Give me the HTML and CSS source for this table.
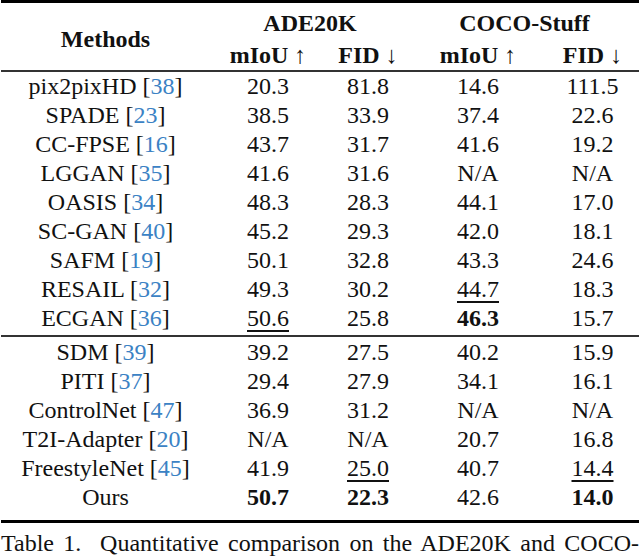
FILE: index.html
```html
<!DOCTYPE html>
<html lang="en">
<head>
<meta charset="utf-8">
<title>Table 1</title>
<link rel="stylesheet" href="styles.css">
</head>
<body>
<div class="page">
<table class="results">
  <colgroup>
    <col class="c-method">
    <col class="c-ade-miou">
    <col class="c-ade-fid">
    <col class="c-coco-miou">
    <col class="c-coco-fid">
  </colgroup>
  <thead>
    <tr class="head-top">
      <th rowspan="2" class="methods-head">Methods</th>
      <th colspan="2" class="ds ds-ade">ADE20K</th>
      <th colspan="2" class="ds ds-coco">COCO-Stuff</th>
    </tr>
    <tr class="head-sub">
      <th>mIoU <span class="arrow">↑</span></th>
      <th>FID <span class="arrow">↓</span></th>
      <th>mIoU <span class="arrow">↑</span></th>
      <th>FID <span class="arrow">↓</span></th>
    </tr>
  </thead>
  <tbody class="group group-gan">
    <tr><td>pix2pixHD [<span class="cite">38</span>]</td><td>20.3</td><td>81.8</td><td>14.6</td><td>111.5</td></tr>
    <tr><td>SPADE [<span class="cite">23</span>]</td><td>38.5</td><td>33.9</td><td>37.4</td><td>22.6</td></tr>
    <tr><td>CC-FPSE [<span class="cite">16</span>]</td><td>43.7</td><td>31.7</td><td>41.6</td><td>19.2</td></tr>
    <tr><td>LGGAN [<span class="cite">35</span>]</td><td>41.6</td><td>31.6</td><td>N/A</td><td>N/A</td></tr>
    <tr><td>OASIS [<span class="cite">34</span>]</td><td>48.3</td><td>28.3</td><td>44.1</td><td>17.0</td></tr>
    <tr><td>SC-GAN [<span class="cite">40</span>]</td><td>45.2</td><td>29.3</td><td>42.0</td><td>18.1</td></tr>
    <tr><td>SAFM [<span class="cite">19</span>]</td><td>50.1</td><td>32.8</td><td>43.3</td><td>24.6</td></tr>
    <tr><td>RESAIL [<span class="cite">32</span>]</td><td>49.3</td><td>30.2</td><td><span class="second">44.7</span></td><td>18.3</td></tr>
    <tr class="last"><td>ECGAN [<span class="cite">36</span>]</td><td><span class="second">50.6</span></td><td>25.8</td><td><b>46.3</b></td><td>15.7</td></tr>
  </tbody>
  <tbody class="group group-diff">
    <tr class="first"><td>SDM [<span class="cite">39</span>]</td><td>39.2</td><td>27.5</td><td>40.2</td><td>15.9</td></tr>
    <tr><td>PITI [<span class="cite">37</span>]</td><td>29.4</td><td>27.9</td><td>34.1</td><td>16.1</td></tr>
    <tr><td>ControlNet [<span class="cite">47</span>]</td><td>36.9</td><td>31.2</td><td>N/A</td><td>N/A</td></tr>
    <tr><td>T2I-Adapter [<span class="cite">20</span>]</td><td>N/A</td><td>N/A</td><td>20.7</td><td>16.8</td></tr>
    <tr><td>FreestyleNet [<span class="cite">45</span>]</td><td>41.9</td><td><span class="second">25.0</span></td><td>40.7</td><td><span class="second">14.4</span></td></tr>
    <tr class="last"><td>Ours</td><td><b>50.7</b></td><td><b>22.3</b></td><td>42.6</td><td><b>14.0</b></td></tr>
  </tbody>
</table>
<p class="caption">Table 1.&nbsp; Quantitative comparison on the ADE20K and COCO-</p>
</div>
</body>
</html>
```

FILE: styles.css
```css
html, body {
  margin: 0;
  padding: 0;
  background: #ffffff;
}

body {
  width: 640px;
  height: 558px;
  overflow: hidden;
  font-family: "Liberation Serif", "Times New Roman", serif;
  font-size: 24px;
  color: #111111;
}

.page {
  display: flex;
  flex-direction: column;
  padding: 0 1px;
}

.results {
  border-collapse: collapse;
  table-layout: fixed;
  width: 638px;
  line-height: 29px;
}

.c-method { width: 209px; }
.c-ade-miou { width: 116px; }
.c-ade-fid { width: 84px; }
.c-coco-miou { width: 136px; }
.c-coco-fid { width: 93px; }

.results th,
.results td {
  padding: 0;
  text-align: center;
  white-space: nowrap;
}

.results th {
  font-weight: bold;
}

.head-top {
  border-top: 3px solid #000000;
}

.head-top th {
  padding-top: 6px;
}

.methods-head {
  vertical-align: middle;
}

.ds-ade {
  padding-left: 32px;
}

.ds-coco {
  padding-left: 18px;
}

.head-sub th {
  padding-top: 3px;
  padding-bottom: 0;
}

.head-sub {
  border-bottom: 2px solid #333333;
}

.arrow {
  font-weight: normal;
}

.group-gan .last td {
  padding-bottom: 2px;
}

.group-diff {
  border-top: 2px solid #333333;
  border-bottom: 3px solid #000000;
}

.group-diff .first td {
  padding-top: 1px;
}

.group-diff .last td {
  padding-bottom: 8px;
}

.cite {
  color: #3b82c4;
}

.second {
  text-decoration: underline;
  text-decoration-thickness: 1.5px;
  text-underline-offset: 4px;
}

.caption {
  margin: 6px 0 0 0;
  line-height: 29px;
  text-align: justify;
  text-align-last: justify;
}
```
